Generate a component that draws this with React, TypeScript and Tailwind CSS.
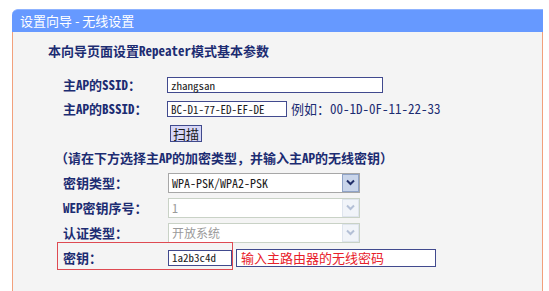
import React from "react";

const F = "font-['Noto_Sans_Mono_CJK_SC','Liberation_Mono','Noto_Sans_CJK_SC',monospace]";

function Chevron({ color }: { color: string }) {
  return (
    <svg width="9" height="7" viewBox="0 0 9 7">
      <path d="M1 1.5 L4.5 5 L8 1.5" fill="none" stroke={color} strokeWidth="2" />
    </svg>
  );
}

function Select({ value, disabled }: { value: string; disabled?: boolean }) {
  return (
    <div
      className={`w-[192px] h-[20px] flex items-center bg-white border font-normal ${
        disabled ? "border-[#c9d2c6]" : "border-[#a7a7a7]"
      }`}
    >
      <div className={`flex-1 pl-[3px] text-[12px] leading-none ${disabled ? "text-[#9a9a9a]" : "text-[#1a1a1a]"}`}>
        {value}
      </div>
      <div
        className={`w-[17px] h-[18px] flex items-center justify-center border ${
          disabled ? "bg-[#f1f4f9] border-[#dfe5ee]" : "bg-[#c9d5ea] border-[#8fa3c7]"
        }`}
      >
        <Chevron color={disabled ? "#b4c0d6" : "#22306a"} />
      </div>
    </div>
  );
}

export default function App() {
  return (
    <div className={`w-[549px] h-[291px] overflow-hidden bg-white pt-[9px] pl-[12px] ${F}`}>
      <div className="w-[531px]">
        <div className="h-[23px] rounded-tl-[6px] bg-[#6699ff] border-t border-[#8fb3ff] pl-[8px] flex items-center text-white text-[13px] font-['Noto_Sans_CJK_SC',sans-serif]">
          设置向导 - 无线设置
        </div>
        <div className="h-[259px] bg-[#f4f4f4] border-l border-r border-[#f2a07c] pt-[11px] text-[#1c2c72]">
          <div className="pl-[35px] h-[16px] text-[13px] leading-[16px] font-bold">
            本向导页面设置Repeater模式基本参数
          </div>
          <div className="pl-[50px] mt-[14px] text-[13px] font-bold">
            <div className="h-[24px] flex items-center">
              <div className="w-[104px]">主AP的SSID：</div>
              <div className="w-[216px] h-[16px] bg-white border border-[#414a8e] pl-[3px] flex items-center text-[11px] font-normal text-[#1a1a1a]">
                zhangsan
              </div>
            </div>
            <div className="h-[24px] flex items-center">
              <div className="w-[104px]">主AP的BSSID：</div>
              <div className="w-[120px] h-[16px] bg-white border border-[#414a8e] pl-[3px] flex items-center text-[11px] font-normal text-[#1a1a1a] overflow-hidden whitespace-nowrap">
                BC-D1-77-ED-EF-DE
              </div>
              <div className="ml-[4px] font-normal">例如：00-1D-0F-11-22-33</div>
            </div>
            <div className="h-[25px] flex items-center">
              <div className="w-[107px]" />
              <div className="h-[17px] px-[2px] bg-[#d6d6f6] border border-[#404a8c] flex items-center text-[13px] font-normal text-[#1a1a1a]">
                扫描
              </div>
            </div>
            <div className="h-[24px] flex items-center whitespace-nowrap">
              <span className="-ml-[8px]">（请在下方选择主AP的加密类型，并输入主AP的无线密钥）</span>
            </div>
            <div className="h-[25px] flex items-center">
              <div className="w-[105px]">密钥类型：</div>
              <Select value="WPA-PSK/WPA2-PSK" />
            </div>
            <div className="h-[25px] flex items-center">
              <div className="w-[105px]">WEP密钥序号：</div>
              <Select value="1" disabled />
            </div>
            <div className="h-[25px] flex items-center">
              <div className="w-[105px]">认证类型：</div>
              <Select value="开放系统" disabled />
            </div>
            <div className="h-[25px] flex items-center relative">
              <div className="absolute left-[-6px] top-[-3px] w-[176px] h-[28px] border border-[#de4a52] pointer-events-none" />
              <div className="w-[105px]">密钥：</div>
              <div className="w-[64px] h-[16px] bg-white border border-[#414a8e] pl-[3px] flex items-center text-[11px] font-normal text-[#1a1a1a]">
                1a2b3c4d
              </div>
              <div className="ml-[4px] w-[200px] h-[18px] bg-white border border-[#414a8e] pl-[4px] flex items-center text-[13px] font-normal text-[#e8202a] font-['Noto_Sans_CJK_SC',sans-serif]">
                输入主路由器的无线密码
              </div>
            </div>
          </div>
        </div>
      </div>
    </div>
  );
}
